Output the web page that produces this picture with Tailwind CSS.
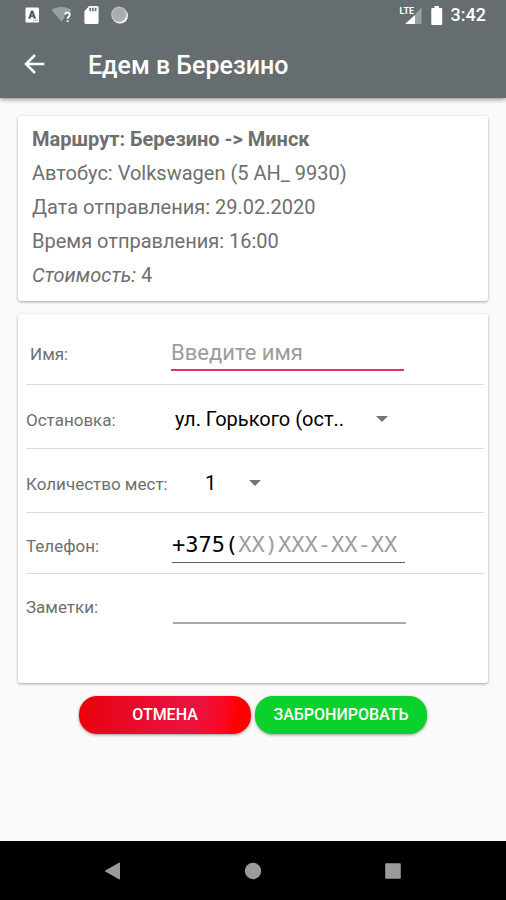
<!DOCTYPE html>
<html lang="ru">
<head>
<meta charset="utf-8">
<meta name="viewport" content="width=device-width, initial-scale=1">
<title>Едем в Березино</title>
<script src="https://cdn.jsdelivr.net/npm/@tailwindcss/browser@4"></script>
</head>
<body class="flex min-h-screen flex-col bg-[#fafafa] font-[Roboto,'Noto_Sans',sans-serif] text-[#6f6f6f]">

<header class="relative bg-[#666d70] text-white shadow-[0_1px_5px_rgba(0,0,0,0.5)]">
  <!-- Status bar -->
  <div class="flex h-[30px] items-center justify-between pr-5 pl-6">
    <div class="flex items-center gap-[11px]">
      <svg class="size-4" viewBox="0 0 16 16" aria-hidden="true">
        <rect x="1.5" y="0.5" width="13.5" height="15" rx="1.2" fill="#fff"/>
        <path d="M4.500 11.500 7.200 3.800h1.800l2.700 7.700H9.900l-.5-1.700H6.800l-.5 1.700zM7.200 8.500h1.800l-.9-2.700z" fill="#4c5255" stroke="#4c5255" stroke-width=".4"/>
        <path d="M9 13.3h5" stroke="#9ba0a2" stroke-width=".8"/>
      </svg>
      <svg class="h-4 w-[22px]" viewBox="0 0 22 16" aria-hidden="true">
        <path d="M0.5 3C6-.9 15-.9 20.5 3l-2 2.6c-2-1-4.500 0-5 2v3l-3 4z" fill="#9a9fa1"/>
        <path d="M14.200 7.700c.2-2.700 4.600-2.700 4.600.1 0 1.900-2.200 2-2.200 4M16.600 13.200v1.900" fill="none" stroke="#fff" stroke-width="1.800"/>
      </svg>
      <svg class="h-[18px] w-[15px]" viewBox="0 0 15 18" aria-hidden="true">
        <path d="M5.200 0H13a1.600 1.600 0 0 1 1.600 1.600v14.700A1.600 1.600 0 0 1 13 18H2a1.600 1.600 0 0 1-1.600-1.700V5.200z" fill="#fff"/>
        <path d="M6.200 1.800v3.400M8.900 1.800v3.400M11.600 1.800v3.400" stroke="#666d70" stroke-width="1.700"/>
      </svg>
      <svg class="size-[18px]" viewBox="0 0 18 18" aria-hidden="true">
        <circle cx="9.900" cy="9.600" r="8" fill="#fff"/>
        <circle cx="9" cy="8.500" r="7.800" fill="#a9adaf"/>
        <circle cx="9" cy="8.500" r="7.200" fill="none" stroke="#cfd2d3" stroke-width="1.200" stroke-dasharray="1.200 1.200"/>
      </svg>
    </div>
    <div class="flex items-center">
      <div class="relative h-[19px] w-[22px]">
        <span class="absolute top-0 left-0 text-[9px] leading-[10px] font-bold">LTE</span>
        <svg class="absolute right-0 bottom-px h-[17px] w-[18px]" viewBox="0 0 18 17" aria-hidden="true">
          <path d="M11 8 13.500 4.500 17.500 .5V17H11z" fill="#9a9fa1"/>
          <path d="M1 17 11 8v9z" fill="#fff"/>
        </svg>
      </div>
      <svg class="ml-[9px] h-[19px] w-[12px]" viewBox="0 0 12 19" aria-hidden="true">
        <path d="M3.500 0h4.500v2H10.300c.5 0 .9.400.9.900v15.200c0 .5-.4.900-.9.900H1.200c-.5 0-.9-.4-.9-.9V2.900c0-.5.4-.9.900-.9h2.300z" fill="#fff"/>
      </svg>
      <span class="ml-2 text-[18px] leading-6 font-medium">3:42</span>
    </div>
  </div>
  <!-- App bar -->
  <div class="flex h-[68px] items-center pl-[23px]">
    <button type="button" aria-label="Назад" class="size-6">
      <svg class="size-6" viewBox="0 0 24 24" fill="none" stroke="#fff" stroke-width="2.500" aria-hidden="true"><path d="M21.300 12H3.500M12 3 3 12l9 9"/></svg>
    </button>
    <h1 class="ml-[41px] pt-1 text-[25px] leading-8 font-medium">Едем в Березино</h1>
  </div>
</header>

<main class="flex-1 px-[18px] pt-[18px]">
  <section class="rounded-[3px] bg-white px-[14px] pt-[6px] pb-[9px] text-[20px] leading-[34px] shadow-[0_1px_3px_rgba(0,0,0,0.35)]">
    <p class="font-bold">Маршрут: Березино -&gt; Минск</p>
    <p>Автобус: Volkswagen (5 АН_ 9930)</p>
    <p>Дата отправления: 29.02.2020</p>
    <p>Время отправления: 16:00</p>
    <p><i>Стоимость:</i> 4</p>
  </section>

  <form>
    <div class="mt-[13px] rounded-[3px] bg-white pt-[6px] pr-1 pb-[43px] pl-2 text-[17px] shadow-[0_1px_3px_rgba(0,0,0,0.35)]">
      <div class="flex h-[65px] items-center border-b border-[#dcdcdc] pt-[2px]">
        <label for="name" class="w-[145px] shrink-0 pt-1 pl-1">Имя:</label>
        <input id="name" type="text" placeholder="Введите имя" class="mr-20 h-9 min-w-0 flex-1 border-b-2 border-[#e0346f] text-[22px] text-black outline-none placeholder:text-[#9c9c9c]">
      </div>
      <div class="flex h-16 items-center border-b border-[#dcdcdc] pt-1">
        <label for="stop" class="w-[145px] shrink-0 pt-1">Остановка:</label>
        <div class="relative mr-20 flex flex-1 items-center">
          <select id="stop" class="h-9 w-full appearance-none pl-1 text-[20px] text-black outline-none">
            <option>ул. Горького (ост..</option>
          </select>
          <svg class="pointer-events-none absolute right-4 h-[6px] w-3" viewBox="0 0 12 6" aria-hidden="true"><path d="M0 0h12L6 6z" fill="#757575"/></svg>
        </div>
      </div>
      <div class="flex h-16 items-center border-b border-[#dcdcdc] pt-1">
        <label for="seats" class="w-[145px] shrink-0 pt-1 whitespace-nowrap">Количество мест:</label>
        <div class="relative ml-[30px] flex w-[60px] items-center">
          <select id="seats" class="h-9 w-full appearance-none pl-1 text-[20px] text-black outline-none">
            <option>1</option><option>2</option><option>3</option><option>4</option>
          </select>
          <svg class="pointer-events-none absolute right-0 h-[6px] w-3" viewBox="0 0 12 6" aria-hidden="true"><path d="M0 0h12L6 6z" fill="#757575"/></svg>
        </div>
      </div>
      <div class="flex h-[61px] items-center border-b border-[#dcdcdc] pt-1">
        <label for="phone" class="w-[146px] shrink-0 pt-1">Телефон:</label>
        <div class="relative mr-[79px] flex min-w-0 flex-1 font-['DejaVu_Sans_Mono',monospace] text-[22px]">
          <input id="phone" type="tel" value="+375(" class="h-9 w-full border-b border-[#5f5f5f] text-black outline-none">
          <span class="pointer-events-none absolute inset-0 pl-[5ch] leading-[35px] text-[#9c9c9c]" aria-hidden="true">XX)XXX-XX-XX</span>
        </div>
      </div>
      <div class="flex h-[66px] items-center pt-[2px]">
        <label for="notes" class="w-[147px] shrink-0">Заметки:</label>
        <input id="notes" type="text" class="mr-[78px] h-8 min-w-0 flex-1 border-b-2 border-[#a9a9a9] text-[20px] text-black outline-none">
      </div>
    </div>
    <div class="mt-[13px] flex justify-center gap-1 text-[16px] leading-6 font-medium text-white">
      <button type="button" class="h-[38px] w-[172px] rounded-[18px] bg-linear-100 from-[#e80000] via-[#ea1240] via-65% to-[#ff0000] to-90% shadow-[0_1px_3px_rgba(0,0,0,0.4)]">ОТМЕНА</button>
      <button type="submit" class="h-[38px] w-[172px] rounded-[18px] bg-[#0bd12c] shadow-[0_1px_3px_rgba(0,0,0,0.4)]">ЗАБРОНИРОВАТЬ</button>
    </div>
  </form>
</main>

<nav class="flex h-[59px] items-center justify-around bg-black px-[43px]" aria-label="Системная навигация">
  <button type="button" aria-label="Назад"><svg class="size-[18px]" viewBox="0 0 18 18" aria-hidden="true"><path d="M1.300 9 15.500 .9v16.200z" fill="#9b9b9b" stroke="#9b9b9b" stroke-linejoin="round"/></svg></button>
  <button type="button" aria-label="Домой"><svg class="size-[18px]" viewBox="0 0 18 18" aria-hidden="true"><circle cx="9" cy="9" r="8.200" fill="#9b9b9b"/></svg></button>
  <button type="button" aria-label="Недавние"><svg class="size-[18px]" viewBox="0 0 18 18" aria-hidden="true"><rect x="1.200" y="1.200" width="15.600" height="15.600" rx="1" fill="#9b9b9b"/></svg></button>
</nav>
</body>
</html>
